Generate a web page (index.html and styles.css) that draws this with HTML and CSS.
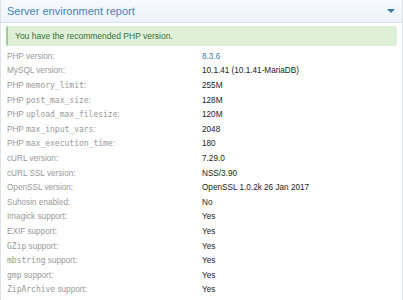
FILE: index.html
```html
<!DOCTYPE html>
<html lang="en">
  <head>
    <meta charset="UTF-8" />
    <meta name="viewport" content="width=device-width, initial-scale=1.0" />
    <title>Server environment report</title>
    <link rel="stylesheet" href="styles.css">
  </head>

  <body>
    <div class="panel">
      <div class="panel-head">
        <h2>Server environment report</h2>
        <span class="caret"></span>
      </div>

      <div class="panel-body">
        <div class="alert">You have the recommended PHP version.</div>

        <table class="report">
          <tr><td>PHP version:</td><td class="ok">8.3.6</td></tr>
          <tr><td>MySQL version:</td><td>10.1.41 (10.1.41-MariaDB)</td></tr>
          <tr><td>PHP <code>memory_limit</code>:</td><td>255M</td></tr>
          <tr><td>PHP <code>post_max_size</code>:</td><td>128M</td></tr>
          <tr><td>PHP <code>upload_max_filesize</code>:</td><td>120M</td></tr>
          <tr><td>PHP <code>max_input_vars</code>:</td><td>2048</td></tr>
          <tr><td>PHP <code>max_execution_time</code>:</td><td>180</td></tr>
          <tr><td>cURL version:</td><td>7.29.0</td></tr>
          <tr><td>cURL SSL version:</td><td>NSS/3.90</td></tr>
          <tr><td>OpenSSL version:</td><td>OpenSSL 1.0.2k 26 Jan 2017</td></tr>
          <tr><td>Suhosin enabled:</td><td>No</td></tr>
          <tr><td>Imagick support:</td><td>Yes</td></tr>
          <tr><td>EXIF support:</td><td>Yes</td></tr>
          <tr><td><code>GZip</code> support:</td><td>Yes</td></tr>
          <tr><td><code>mbstring</code> support:</td><td>Yes</td></tr>
          <tr><td><code>gmp</code> support:</td><td>Yes</td></tr>
          <tr><td><code>ZipArchive</code> support:</td><td>Yes</td></tr>
        </table>
      </div>
    </div>
  </body>
</html>
```

FILE: styles.css
```css
body {
  font-family: "Liberation Sans", Arial, sans-serif;
  margin: 0;
  padding: 0;
  background: #fff;
}

.panel {
  border-left: 1px solid #dde3e8;
  border-right: 1px solid #dde3e8;
  height: 300px;
  box-sizing: border-box;
}

.panel-head {
  display: flex;
  justify-content: space-between;
  align-items: center;
  height: 22px;
  padding: 0 7px 0 6px;
  background: linear-gradient(#f7fafd, #ebf3fa);
  border-bottom: 1px solid #d6e2ec;
}

.panel-head h2 {
  margin: 0;
  font-size: 11px;
  font-weight: normal;
  color: #4682b8;
}

.caret {
  width: 0;
  height: 0;
  border-left: 4px solid transparent;
  border-right: 4px solid transparent;
  border-top: 4px solid #3a78b0;
}

.panel-body {
  padding: 3px 5px 0 5px;
}

.alert {
  background: #dff0d8;
  border-left: 2px solid #9fcf8d;
  border-radius: 2px;
  color: #3c6e35;
  font-size: 8.5px;
  padding: 5px 7px;
}

.report {
  border-collapse: collapse;
  margin-top: 3px;
  font-size: 8.2px;
}

.report td {
  height: 14.6px;
  padding: 0 0 0 1px;
  color: #222;
}

.report td:first-child {
  width: 194px;
  color: #999;
}

.report td.ok {
  color: #3b7ab3;
}

code {
  font-family: "DejaVu Sans Mono", monospace;
  font-size: 8px;
}
```
